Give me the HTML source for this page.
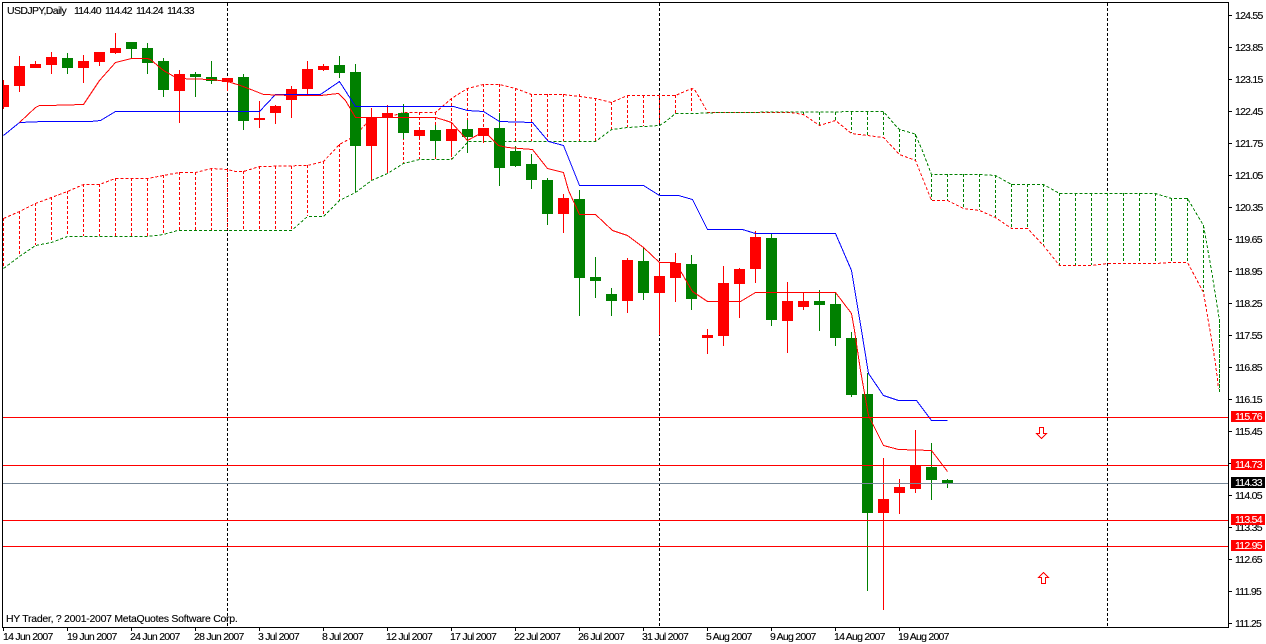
<!DOCTYPE html>
<html><head><meta charset="utf-8"><title>USDJPY,Daily</title>
<style>
html,body{margin:0;padding:0;background:#fff;width:1266px;height:644px;overflow:hidden}
svg{display:block}
text{font-family:"Liberation Sans",sans-serif;font-size:10.5px;fill:#000;letter-spacing:-.75px;stroke:#000;stroke-width:.12px}
.w{fill:#fff;stroke:#fff}
</style></head><body>
<svg width="1266" height="644" viewBox="0 0 1266 644" xmlns="http://www.w3.org/2000/svg" shape-rendering="crispEdges">
<rect width="1266" height="644" fill="#fff"/>
<g fill="none" stroke-width="1">
<!-- separators -->
<path d="M227.5 3V627M659.5 3V627M1107.5 3V627" stroke="#000" stroke-dasharray="3 2"/>
<!-- cloud hatch -->
<path stroke="#f00" stroke-dasharray="3 2" d="M3.5 218V268M19.5 211V256M35.5 203V245M51.5 197V242M67.5 191V236M83.5 184V236M99.5 184V236M115.5 178V236M131.5 178V236M147.5 178V236M163.5 175V234M179.5 172V230M195.5 172V230M211.5 168V230M227.5 169V230M243.5 171V230M259.5 166V230M275.5 166V230M291.5 166V230M307.5 165V216M323.5 161V216M339.5 144V200M355.5 140V192M371.5 117V180M387.5 117V173M403.5 112V163M419.5 112V159M435.5 112V159M451.5 98V159M467.5 88V141M483.5 84V141M499.5 84V141M515.5 88V141M531.5 94V141M547.5 94V141M563.5 94V141M579.5 94V141M595.5 98V141M611.5 102V129M627.5 95V127M643.5 95V126M659.5 95V125M675.5 95V113M691.5 88V113"/>
<path stroke="#008000" stroke-dasharray="3 2" d="M803.5 112V114M819.5 112V125M835.5 112V120M851.5 112V133M867.5 112V136M883.5 112V137M899.5 129V154M915.5 134V160M931.5 174V200M947.5 174V200M963.5 174V208M979.5 174V210M995.5 175V217M1011.5 184V228M1027.5 184V228M1043.5 184V245M1059.5 193V265M1075.5 193V265M1091.5 193V265M1107.5 193V263M1123.5 193V263M1139.5 193V263M1155.5 193V263M1171.5 198V262M1187.5 198V262M1203.5 225V292M1219.5 320V392"/>
<!-- cloud lines -->
<polyline stroke="#f00" stroke-dasharray="3 2" points="3.5,218.5 19.5,211.5 35.5,203.5 51.5,197.5 67.5,191.5 83.5,184.5 99.5,184.5 115.5,178.5 147.5,178.5 163.5,175.5 179.5,172.5 195.5,172.5 211.5,168.5 227.5,169.5 235.5,171.5 243.5,171.5 259.5,166.5 307.5,165.5 323.5,161.5 339.5,144.5 355.5,135.5 371.5,117.5 387.5,117.5 403.5,112.5 435.5,112.5 451.5,98.5 467.5,88.5 483.5,84.5 499.5,84.5 515.5,88.5 531.5,94.5 563.5,94.5 595.5,98.5 611.5,102.5 627.5,95.5 675.5,95.5 691.5,88.5 694.5,89.5 704.5,106.5 707.5,112.5 790.5,112.5 803.5,114.5 819.5,125.5 835.5,120.5 851.5,133.5 883.5,137.5 899.5,154.5 915.5,160.5 931.5,200.5 947.5,200.5 963.5,208.5 979.5,210.5 995.5,217.5 1011.5,228.5 1027.5,228.5 1043.5,245.5 1059.5,265.5 1091.5,265.5 1107.5,263.5 1155.5,263.5 1171.5,262.5 1187.5,262.5 1203.5,292.5 1210.5,333.5 1215.5,363.5 1218.5,388.5"/>
<polyline stroke="#008000" stroke-dasharray="3 2" points="3.5,268.5 19.5,256.5 35.5,245.5 51.5,242.5 67.5,236.5 147.5,236.5 163.5,234.5 177.5,230.5 291.5,230.5 307.5,216.5 323.5,216.5 339.5,200.5 355.5,192.5 371.5,180.5 387.5,173.5 403.5,163.5 419.5,159.5 451.5,159.5 468.5,141.5 595.5,141.5 611.5,129.5 627.5,127.5 643.5,126.5 659.5,125.5 664.5,122.5 675.5,113.5 691.5,113.5 720.5,112.5 883.5,111.5 888.5,117.5 895.5,125.5 899.5,129.5 913.5,133.5 915.5,134.5 923.5,153.5 931.5,174.5 979.5,174.5 995.5,175.5 1011.5,184.5 1043.5,184.5 1059.5,193.5 1155.5,193.5 1171.5,198.5 1187.5,198.5 1203.5,225.5 1211.5,270.5 1219.5,320.5 1219.5,392.5"/>
<!-- candle wicks -->
<path stroke="#f00" d="M3.5 80V109M19.5 56V92M35.5 61V68M51.5 52V74M83.5 55V83M99.5 52V66M115.5 33V54M179.5 70V123M227.5 78V91M259.5 101V128M275.5 105V124M291.5 86V118M307.5 61V94M323.5 64V71M371.5 108V179M387.5 105V173M419.5 127V140M451.5 123V157M483.5 128V143M563.5 194V233M627.5 258V313M659.5 262V335M675.5 253V302M707.5 329V354M723.5 266V346M739.5 268V318M755.5 231V283M787.5 282V353M803.5 292V310M883.5 458V610M899.5 479V514M915.5 430V493"/>
<path stroke="#008000" d="M67.5 53V74M131.5 42V58M147.5 43V74M163.5 58V97M195.5 72V97M211.5 61V84M243.5 74V130M339.5 56V78M355.5 64V192M403.5 104V139M435.5 125V157M467.5 120V153M499.5 113V186M515.5 146V167M531.5 154V189M547.5 178V225M579.5 190V316M595.5 257V298M611.5 288V316M643.5 247V300M691.5 255V310M771.5 233V326M819.5 290V331M835.5 292V346M851.5 332V397M867.5 373V591M931.5 443V500M947.5 479V488"/>
</g>
<!-- candle bodies -->
<path fill="#f00" d="M-2 85h11v22h-11zM14 66h11v20h-11zM30 64h11v4h-11zM46 57h11v8h-11zM78 61h11v7h-11zM94 52h11v10h-11zM110 48h11v5h-11zM174 74h11v17h-11zM222 78h11v4h-11zM254 118h11v2h-11zM270 106h11v7h-11zM286 89h11v11h-11zM302 69h11v20h-11zM318 66h11v4h-11zM366 117h11v29h-11zM382 113h11v4h-11zM414 130h11v6h-11zM446 129h11v12h-11zM478 128h11v8h-11zM558 198h11v16h-11zM622 260h11v41h-11zM654 276h11v17h-11zM670 263h11v15h-11zM702 335h11v3h-11zM718 283h11v53h-11zM734 269h11v15h-11zM750 237h11v32h-11zM782 301h11v20h-11zM798 301h11v6h-11zM878 499h11v14h-11zM894 487h11v6h-11zM910 465h11v24h-11z"/>
<path fill="#008000" d="M62 58h11v10h-11zM126 42h11v7h-11zM142 48h11v15h-11zM158 61h11v29h-11zM190 74h11v3h-11zM206 77h11v4h-11zM238 77h11v44h-11zM334 65h11v8h-11zM350 72h11v74h-11zM398 113h11v20h-11zM430 130h11v11h-11zM462 129h11v8h-11zM494 128h11v40h-11zM510 151h11v15h-11zM526 164h11v16h-11zM542 180h11v34h-11zM574 199h11v79h-11zM590 277h11v4h-11zM606 294h11v7h-11zM638 261h11v32h-11zM686 264h11v35h-11zM766 238h11v82h-11zM814 301h11v4h-11zM830 304h11v34h-11zM846 338h11v57h-11zM862 394h11v119h-11zM926 467h11v13h-11zM942 480h11v4h-11z"/>
<g fill="none" stroke-width="1">
<!-- kijun (blue) -->
<polyline stroke="#00f" points="3.5,135.5 19.5,122.5 43.5,121.5 90.5,121.5 100.5,120.5 115.5,111.5 259.5,111.5 275.5,94.5 320.5,94.5 339.5,81.5 355.5,106.5 453.5,106.5 467.5,110.5 483.5,111.5 499.5,121.5 532.5,122.5 548.5,141.5 563.5,145.5 579.5,185.5 643.5,185.5 659.5,195.5 678.5,195.5 692.5,199.5 707.5,229.5 742.5,229.5 755.5,233.5 835.5,233.5 851.5,270.5 861.5,330.5 868.5,373.5 883.5,395.5 898.5,400.5 916.5,400.5 931.5,420.5 947.5,420.5"/>
<!-- tenkan (red) -->
<polyline stroke="#f00" points="19.5,122.5 35.5,107.5 39.5,105.5 47.5,105.5 83.5,104.5 99.5,80.5 115.5,62.5 131.5,58.5 147.5,58.5 150.5,59.5 163.5,70.5 177.5,78.5 211.5,79.5 227.5,81.5 240.5,85.5 253.5,90.5 263.5,94.5 290.5,95.5 320.5,95.5 338.5,93.5 345.5,100.5 355.5,117.5 435.5,117.5 445.5,120.5 451.5,122.5 467.5,140.5 478.5,134.5 487.5,134.5 498.5,145.5 507.5,147.5 532.5,149.5 547.5,168.5 563.5,172.5 568.5,190.5 579.5,214.5 595.5,214.5 612.5,230.5 627.5,235.5 643.5,247.5 659.5,262.5 675.5,262.5 692.5,291.5 707.5,301.5 740.5,301.5 755.5,292.5 835.5,292.5 851.5,313.5 854.5,330.5 860.5,370.5 868.5,415.5 883.5,445.5 898.5,449.5 931.5,450.5 947.5,471.5"/>
<!-- horizontal levels -->
<path stroke="#778899" d="M3 483.5H1228"/>
<path stroke="#f00" d="M3 417.5H1228M3 465.5H1228M3 520.5H1228M3 546.5H1228"/>
<!-- arrows -->
<path stroke="#f00" fill="#fff" d="M1039.5 427.5H1043.5V433.5H1046.5L1041.5 438.5L1036.5 433.5H1039.5Z"/>
<path stroke="#f00" fill="#fff" d="M1043.5 572.5L1048.5 577.5H1045.5V583.5H1041.5V577.5H1038.5Z"/>
</g>
<!-- frame -->
<rect x="0" y="0" width="2" height="644" fill="#fff"/>
<path fill="none" stroke="#000" d="M2.5 2.5H1228.5V627.5H2.5Z"/>
<!-- ticks -->
<path fill="none" stroke="#000" d="M1228 15.5h4M1228 47.5h4M1228 79.5h4M1228 111.5h4M1228 143.5h4M1228 175.5h4M1228 207.5h4M1228 239.5h4M1228 271.5h4M1228 303.5h4M1228 335.5h4M1228 367.5h4M1228 399.5h4M1228 431.5h4M1228 463.5h4M1228 495.5h4M1228 527.5h4M1228 559.5h4M1228 591.5h4M1228 623.5h4M3.5 627v4M67.5 627v4M131.5 627v4M195.5 627v4M259.5 627v4M323.5 627v4M387.5 627v4M451.5 627v4M515.5 627v4M579.5 627v4M643.5 627v4M707.5 627v4M771.5 627v4M835.5 627v4M899.5 627v4"/>
<!-- title -->
<g shape-rendering="auto">
<text x="7" y="14" textLength="59">USDJPY,Daily</text>
<text x="74" y="14">114.40</text><text x="105" y="14">114.42</text><text x="136" y="14">114.24</text><text x="167" y="14">114.33</text>
<text x="6" y="622" textLength="231">HY Trader, ? 2001-2007 MetaQuotes Software Corp.</text>
<!-- price axis -->
<text x="1235" y="19">124.55</text><text x="1235" y="51">123.85</text><text x="1235" y="83">123.15</text><text x="1235" y="115">122.45</text><text x="1235" y="147">121.75</text><text x="1235" y="179">121.05</text><text x="1235" y="211">120.35</text><text x="1235" y="243">119.65</text><text x="1235" y="275">118.95</text><text x="1235" y="307">118.25</text><text x="1235" y="339">117.55</text><text x="1235" y="371">116.85</text><text x="1235" y="403">116.15</text><text x="1235" y="435">115.45</text><text x="1235" y="499">114.05</text><text x="1235" y="531">113.35</text><text x="1235" y="563">112.65</text><text x="1235" y="595">111.95</text><text x="1235" y="627">111.25</text>
<!-- time axis -->
<text x="3" y="640">14 Jun 2007</text><text x="67" y="640">19 Jun 2007</text><text x="130" y="640">24 Jun 2007</text><text x="194" y="640">28 Jun 2007</text><text x="258" y="640">3 Jul 2007</text><text x="322" y="640">8 Jul 2007</text><text x="386" y="640">12 Jul 2007</text><text x="450" y="640">17 Jul 2007</text><text x="514" y="640">22 Jul 2007</text><text x="578" y="640">26 Jul 2007</text><text x="642" y="640">31 Jul 2007</text><text x="706" y="640">5 Aug 2007</text><text x="770" y="640">9 Aug 2007</text><text x="834" y="640">14 Aug 2007</text><text x="898" y="640">19 Aug 2007</text>
</g>
<!-- price labels -->
<rect x="1231" y="411" width="34" height="11" fill="#f00"/>
<rect x="1231" y="459" width="34" height="11" fill="#f00"/>
<rect x="1231" y="477" width="34" height="11" fill="#000"/>
<rect x="1231" y="514" width="34" height="11" fill="#f00"/>
<rect x="1231" y="540" width="34" height="11" fill="#f00"/>
<g shape-rendering="auto">
<text class="w" x="1235" y="420">115.76</text><text class="w" x="1235" y="468">114.73</text><text class="w" x="1235" y="486">114.33</text><text class="w" x="1235" y="523">113.54</text><text class="w" x="1235" y="549">112.95</text>
</g>
</svg>
</body></html>
